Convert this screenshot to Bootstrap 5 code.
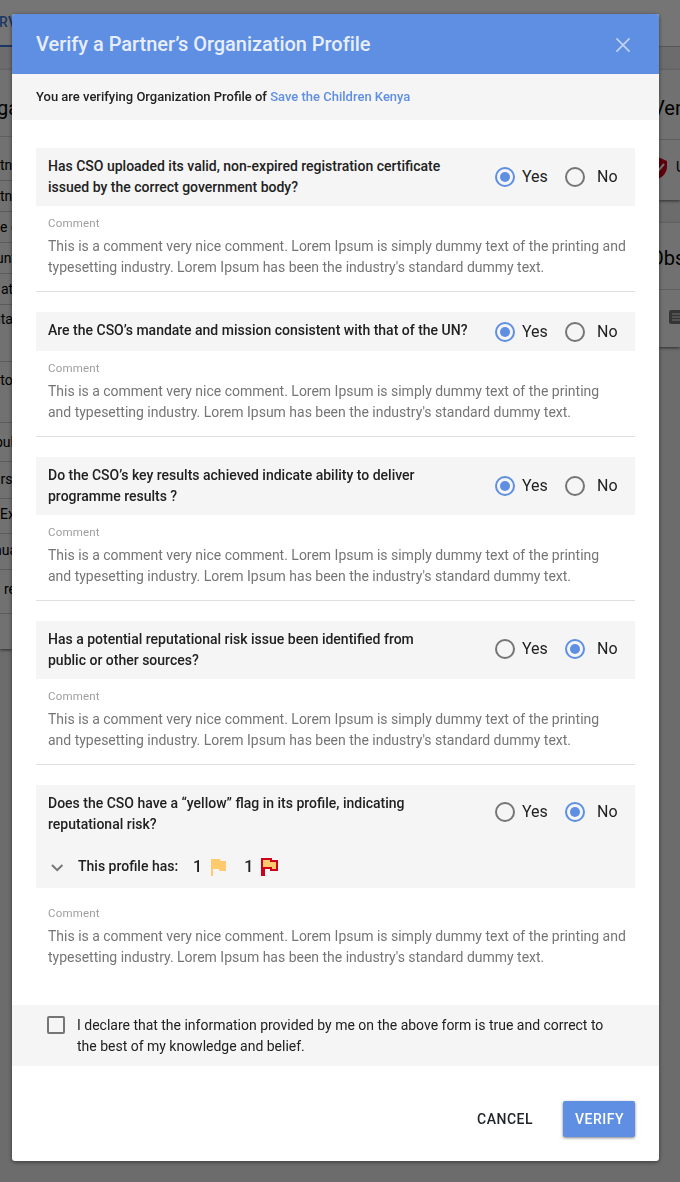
<!DOCTYPE html>
<html lang="en">
<head>
<meta charset="utf-8">
<title>Verify a Partner’s Organization Profile</title>
<link href="https://cdn.jsdelivr.net/npm/bootstrap@5.3.0/dist/css/bootstrap.min.css" rel="stylesheet">
<style>
:root{--brand:#5e8fe3;--panel:#f5f5f5;--ink:#212121}
body{font-family:Roboto,"Liberation Sans",sans-serif;font-size:14px;line-height:21px;color:#000;background:#ebebeb;height:1182px;overflow:hidden}
.medium{font-weight:500}
/* page behind the dialog */
.page-tabs{height:47px;background:#fff;border-bottom:1px solid #bdbdbd}
.page-tab{width:12px;height:47px;border-bottom:2px solid #3c78dc;color:#3c78dc;padding-top:12px;text-indent:-1px;letter-spacing:.3px}
.side-l{width:12px;margin-top:23px}
.side-r{width:21px;margin-top:23px}
.pane{background:#f6f6f6;box-shadow:0 1px 3px rgba(0,0,0,.6)}
.side-l .pane{height:579px}
.pane-title{height:67px;font-size:20px;line-height:24px;padding-top:26px;border-bottom:1px solid #d0d0d0}
.page-row{border-bottom:1px solid #c6c6c6}
.page-row.tall{padding-top:5px}
.pane-item{height:61px}
.dim{background:rgba(0,0,0,.54)}
/* dialog */
.verify-dialog{width:647px;max-width:none;margin:14px 0 0 12px}
.verify-dialog .modal-content{height:1147px;border:0;border-radius:3px;box-shadow:0 1px 4px rgba(0,0,0,.5);color:var(--ink);overflow:hidden}
.verify-dialog .modal-header{height:60px;background:var(--brand);border:0;border-radius:0;padding:0 24px}
.verify-title{font-size:20px;line-height:24px;color:#e7eefb;letter-spacing:-.03px}
.subject{height:46px;background:var(--panel);padding:0 24px 1px;font-size:13px}
.subject a{color:var(--brand)}
.verify-dialog .modal-body{padding:28px 24px 0}
.question{height:144px;border-bottom:1px solid #e0e0e0;margin-bottom:20px}
.q-one{height:125px}
.q-last{height:200px;border:0;margin:0}
.q-head{background:var(--panel);padding:8px 0 8px 12px}
.q-one .q-head{height:39px}
.q-one .q-text{padding-bottom:2px}
.q-text{width:447px}
.choice{font-size:16px}
.choice span{padding-bottom:1px}
.choice svg{width:20px;height:20px}
.choice-yes{width:70px;gap:7px}
.choice-no{gap:12px}
.raised{padding-bottom:2px}
.raised-more{padding-bottom:4px}
.q-note{padding:7px 0 0 12px}
.q-label{font-size:11.5px;color:#9e9e9e;letter-spacing:.2px;line-height:21px}
.q-comment{color:#757575;padding-top:2px;letter-spacing:-.008px}
.flags{height:45px;padding-left:12px}
.flag-count{font-size:16px}
.declare{height:61px;background:var(--panel);padding:10px 24px 0 34px;margin-top:20px;letter-spacing:-.008px}
.check-square{width:18px;height:18px;border:2px solid #757575;border-radius:2px;margin:1px 12px 0 1px}
.verify-dialog .modal-footer{border:0;padding:11px 24px 0;height:95px;margin:0}
.verify-dialog .btn{font-size:14px;height:36px;padding:0 12px;border-radius:2px;font-weight:500;letter-spacing:.5px;margin:0;border:0}
.verify-dialog .btn-cancel{margin-right:18px}
.btn-verify,.btn-verify:hover{background:var(--brand);color:#fff;box-shadow:0 1px 3px rgba(0,0,0,.5);width:72px}
</style>
</head>
<body>
<svg class="d-none">
  <symbol id="on" viewBox="0 0 20 20"><circle cx="10" cy="10" r="9" fill="none" stroke="#5e8fe3" stroke-width="2"/><circle cx="10" cy="10" r="5" fill="#5e8fe3"/></symbol>
  <symbol id="off" viewBox="0 0 20 20"><circle cx="10" cy="10" r="9" fill="none" stroke="#757575" stroke-width="2"/></symbol>
</svg>

<div class="page-tabs"><div class="page-tab medium text-nowrap">RV</div></div>
<div class="d-flex justify-content-between align-items-start">
  <div class="side-l text-nowrap">
    <div class="pane">
      <div class="pane-title" style="text-indent:-3px">ga</div>
      <div class="page-row" style="height:44px;padding-top:18px">tn</div>
      <div class="page-row tall" style="height:31px">tn</div>
      <div class="page-row tall" style="height:31px">e c</div>
      <div class="page-row tall" style="height:31px;text-indent:-4px">unt</div>
      <div class="page-row tall" style="height:31px;text-indent:1px">at</div>
      <div class="page-row" style="height:57px;padding-top:4px;text-indent:-7px">nta</div>
      <div class="page-row" style="height:61px;padding-top:8px;text-indent:-7px">cto</div>
      <div class="page-row" style="height:39px;padding-top:9px;text-indent:-5px">pul</div>
      <div class="page-row" style="height:37px;padding-top:7px;text-indent:-7px">ars</div>
      <div class="page-row tall" style="height:35px">Ex</div>
      <div class="page-row" style="height:36px;padding-top:6px;text-indent:-6px">nua</div>
      <div class="page-row" style="height:44px;padding-top:9px;text-indent:4px">re</div>
    </div>
  </div>
  <div class="side-r text-nowrap">
    <div class="pane" style="margin-bottom:23px">
      <div class="pane-title" style="height:70px;text-indent:-7px">Ver</div>
      <div class="pane-item d-flex" style="height:60px;padding-top:17px">
        <svg class="flex-shrink-0" width="9" height="22" viewBox="0 0 9 22"><path d="M-1 0 8 4v6c0 5-4 10-9 12z" fill="#d0021b"/><path d="M-2 11 0 13 5 7" fill="none" stroke="#fff" stroke-width="2"/></svg><span class="ms-2">U</span>
      </div>
    </div>
    <div class="pane">
      <div class="pane-title" style="height:67px;padding-top:23px;text-indent:-9px">Obs</div>
      <div class="pane-item d-flex align-items-center" style="height:57px;padding:0 0 3px 10px">
        <svg class="flex-shrink-0" width="11" height="14" viewBox="0 0 11 14"><path d="M2 0h9v14H2a2 2 0 0 1-2-2V2a2 2 0 0 1 2-2z" fill="#757575"/><path d="M3 4h8M3 7h8M3 10h8" stroke="#f5f5f5"/></svg>
      </div>
    </div>
  </div>
</div>

<div class="dim position-fixed top-0 start-0 w-100 h-100"></div>
<div class="modal d-block overflow-hidden" tabindex="-1">
 <div class="modal-dialog verify-dialog">
  <div class="modal-content">
   <div class="modal-header d-flex justify-content-between align-items-center">
    <h1 class="verify-title medium m-0">Verify a Partner’s Organization Profile</h1>
    <svg width="24" height="24" viewBox="0 0 24 24" fill="none" stroke="#bfd2f5" stroke-width="1.8"><path d="m5.4 6.4 13.2 13.2M18.600 6.400 5.400 19.600"/></svg>
   </div>
   <div class="subject d-flex align-items-center medium"><span>You are verifying Organization Profile of <a href="#" class="text-decoration-none">Save the Children Kenya</a></span></div>
   <div class="modal-body">
    <section class="question">
     <div class="q-head d-flex align-items-center">
      <div class="q-text medium">Has CSO uploaded its valid, non-expired registration certificate<br>issued by the correct government body?</div>
      <div class="choice choice-yes d-flex align-items-center"><svg><use href="#on"/></svg><span>Yes</span></div>
      <div class="choice choice-no d-flex align-items-center"><svg><use href="#off"/></svg><span>No</span></div>
     </div>
     <div class="q-note"><div class="q-label">Comment</div><div class="q-comment">This is a comment very nice comment. Lorem Ipsum is simply dummy text of the printing and<br>typesetting industry. Lorem Ipsum has been the industry's standard dummy text.</div></div>
    </section>
    <section class="question q-one">
     <div class="q-head d-flex align-items-center">
      <div class="q-text medium">Are the CSO’s mandate and mission consistent with that of the UN?</div>
      <div class="choice choice-yes d-flex align-items-center"><svg><use href="#on"/></svg>Yes</div>
      <div class="choice choice-no d-flex align-items-center"><svg><use href="#off"/></svg>No</div>
     </div>
     <div class="q-note"><div class="q-label">Comment</div><div class="q-comment">This is a comment very nice comment. Lorem Ipsum is simply dummy text of the printing<br>and typesetting industry. Lorem Ipsum has been the industry's standard dummy text.</div></div>
    </section>
    <section class="question">
     <div class="q-head d-flex align-items-center">
      <div class="q-text medium">Do the CSO’s key results achieved indicate ability to deliver<br>programme results ?</div>
      <div class="choice choice-yes d-flex align-items-center"><svg><use href="#on"/></svg><span>Yes</span></div>
      <div class="choice choice-no d-flex align-items-center"><svg><use href="#off"/></svg><span>No</span></div>
     </div>
     <div class="q-note"><div class="q-label">Comment</div><div class="q-comment">This is a comment very nice comment. Lorem Ipsum is simply dummy text of the printing<br>and typesetting industry. Lorem Ipsum has been the industry's standard dummy text.</div></div>
    </section>
    <section class="question">
     <div class="q-head d-flex align-items-center">
      <div class="q-text medium">Has a potential reputational risk issue been identified from<br>public or other sources?</div>
      <div class="choice choice-yes d-flex align-items-center raised"><svg><use href="#off"/></svg><span>Yes</span></div>
      <div class="choice choice-no d-flex align-items-center raised"><svg><use href="#on"/></svg><span>No</span></div>
     </div>
     <div class="q-note"><div class="q-label">Comment</div><div class="q-comment">This is a comment very nice comment. Lorem Ipsum is simply dummy text of the printing<br>and typesetting industry. Lorem Ipsum has been the industry's standard dummy text.</div></div>
    </section>
    <section class="question q-last">
     <div class="q-head d-flex align-items-center">
      <div class="q-text medium">Does the CSO have a “yellow” flag in its profile, indicating<br>reputational risk?</div>
      <div class="choice choice-yes d-flex align-items-center raised-more"><svg><use href="#off"/></svg><span>Yes</span></div>
      <div class="choice choice-no d-flex align-items-center raised-more"><svg><use href="#on"/></svg><span>No</span></div>
     </div>
     <div class="q-head flags d-flex align-items-center medium pb-0" style="padding-top:2px">
      <svg style="margin-right:8px" width="22" height="12" viewBox="0 0 22 12" fill="none" stroke="#757575" stroke-width="2"><path d="m4 4 5.200 5.200L14.400 4"/></svg>
      <span>This profile has:</span>
      <span class="flag-count" style="margin-left:15px">1</span>
      <svg class="ms-2" width="17" height="20" viewBox="0 0 17 20"><path d="M1 2h9l.5 2H16v10H9.500L9 12H3v7H1z" fill="#ffca6e"/></svg>
      <span class="flag-count" style="margin-left:17px">1</span>
      <svg style="margin-left:7px" width="19" height="20" viewBox="0 0 19 20"><path d="M2 2h9l.5 2H17v9h-6l-.5-2H4v8H2z" fill="#ffca6e"/><path d="M2 2h9v2h6v9h-6v-2H4v7H2z" fill="none" stroke="#d0021b" stroke-width="2"/></svg>
     </div>
     <div class="q-note" style="padding-top:15px"><div class="q-label">Comment</div><div class="q-comment">This is a comment very nice comment. Lorem Ipsum is simply dummy text of the printing and<br>typesetting industry. Lorem Ipsum has been the industry's standard dummy text.</div></div>
    </section>
   </div>
   <div class="declare d-flex align-items-start"><span class="check-square flex-shrink-0"></span><span>I declare that the information provided by me on the above form is true and correct to<br>the best of my knowledge and belief.</span></div>
   <div class="modal-footer d-flex align-items-center justify-content-end">
    <button class="btn btn-cancel" type="button">CANCEL</button>
    <button class="btn btn-verify" type="button">VERIFY</button>
   </div>
  </div>
 </div>
</div>
<script src="https://cdn.jsdelivr.net/npm/bootstrap@5.3.0/dist/js/bootstrap.bundle.min.js"></script>
</body>
</html>
